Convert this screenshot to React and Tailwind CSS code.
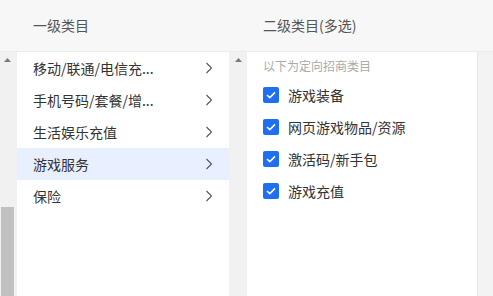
import React from "react";

const font = { fontFamily: '"Noto Sans CJK SC", "Noto Sans", sans-serif' };

function Chevron() {
  return (
    <svg width="8" height="12" viewBox="0 0 8 12" className="shrink-0">
      <path d="M1.5 1 L6.5 6 L1.5 11" fill="none" stroke="#555" strokeWidth="1.1" />
    </svg>
  );
}

function UpArrow() {
  return (
    <svg width="7" height="4" viewBox="0 0 7 4">
      <path d="M0 4 L3.5 0 L7 4 Z" fill="#7a7a7a" />
    </svg>
  );
}

function Check() {
  return (
    <div className="w-[16px] h-[16px] rounded-[2px] bg-[#1f6ff5] flex items-center justify-center shrink-0">
      <svg width="10" height="8" viewBox="0 0 10 8">
        <path d="M1 4 L3.8 6.6 L9 1.4" fill="none" stroke="#fff" strokeWidth="1.5" />
      </svg>
    </div>
  );
}

const rows = ["移动/联通/电信充...", "手机号码/套餐/增...", "生活娱乐充值", "游戏服务", "保险"];
const items = ["游戏装备", "网页游戏物品/资源", "激活码/新手包", "游戏充值"];

export default function App() {
  return (
    <div className="w-[493px] h-[296px] bg-[#f3f3f3] flex flex-col overflow-hidden" style={font}>
      <div className="h-[52px] shrink-0 flex items-center bg-[#f7f7f7] border-b border-[#ececec] text-[14px] text-[#555]">
        <div className="w-[247px] pl-[33px]">一级类目</div>
        <div className="pl-[16px]">二级类目(多选)</div>
      </div>
      <div className="flex flex-1 min-h-0">
        <div className="w-[17px] bg-[#f1f1f1] flex flex-col items-center justify-between">
          <div className="pt-[6px] pr-[2px]"><UpArrow /></div>
          <div className="w-[13px] h-[89px] bg-[#c1c1c1] mr-[3px]" />
        </div>
        <div className="w-[212px] bg-white">
          {rows.map((r, i) => (
            <div
              key={r}
              className={`h-[32px] flex items-center justify-between pl-[16px] pr-[16px] text-[14px] text-[#333] ${i === 3 ? "bg-[#e8efff]" : ""}`}
            >
              <span>{r}</span>
              <Chevron />
            </div>
          ))}
        </div>
        <div className="w-[18px] bg-[#f1f1f1] flex justify-center">
          <div className="pt-[6px]"><UpArrow /></div>
        </div>
        <div className="w-[231px] bg-white border-r border-[#e6e6e6] pl-[16px] pt-[6px]">
          <div className="text-[12px] text-[#aaa] leading-[16px]">以下为定向招商类目</div>
          <div className="pt-[5px]">
            {items.map((t) => (
              <div key={t} className="h-[32px] flex items-center gap-[9px] text-[14px] text-[#333]">
                <Check />
                <span>{t}</span>
              </div>
            ))}
          </div>
        </div>
        <div className="flex-1" />
      </div>
    </div>
  );
}
